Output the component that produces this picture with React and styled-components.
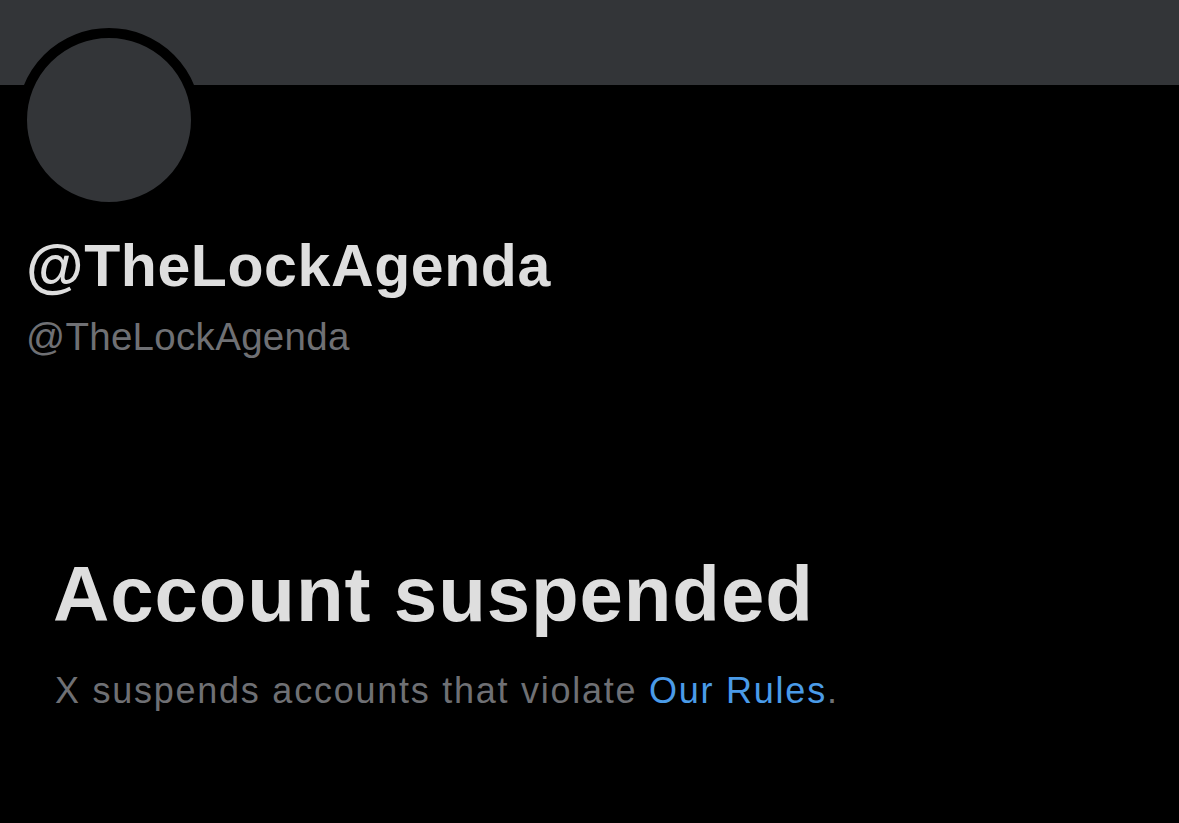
import React from "react";
import styled, { createGlobalStyle } from "styled-components";

const GlobalStyle = createGlobalStyle`
  html, body {
    margin: 0;
    padding: 0;
    background: #000000;
  }
  body {
    font-family: "Liberation Sans", Arial, sans-serif;
    overflow: hidden;
  }
`;

const Page = styled.div`
  width: 1179px;
  height: 823px;
  background: #000000;
  display: flex;
  flex-direction: column;
  overflow: hidden;
`;

const Banner = styled.div`
  height: 85px;
  flex: none;
  background: #333538;
`;

const Profile = styled.div`
  display: flex;
  flex-direction: column;
  padding-left: 17px;
`;

const Avatar = styled.div`
  width: 164px;
  height: 164px;
  margin-top: -57px;
  border: 10px solid #000000;
  border-radius: 50%;
  background: #333538;
`;

const Names = styled.div`
  display: flex;
  flex-direction: column;
  padding-left: 9px;
  margin-top: 20px;
`;

const DisplayName = styled.div`
  font-size: 59px;
  line-height: 68px;
  font-weight: 700;
  color: #dedede;
  letter-spacing: 0.6px;
`;

const Handle = styled.div`
  margin-top: 14px;
  font-size: 38.5px;
  line-height: 46px;
  color: #6f7074;
  letter-spacing: 0.3px;
`;

const Notice = styled.section`
  display: flex;
  flex-direction: column;
  padding-left: 53px;
  margin-top: 189px;
`;

const Title = styled.h1`
  margin: 0;
  font-size: 78px;
  line-height: 90px;
  font-weight: 700;
  color: #dedede;
  letter-spacing: 0.9px;
`;

const Body = styled.p`
  margin: 30px 0 0 2px;
  font-size: 36px;
  line-height: 44px;
  color: #6f7074;
  letter-spacing: 1.75px;
`;

const RulesLink = styled.a`
  color: #4a9be8;
  text-decoration: none;
`;

export default function App() {
  return (
    <>
      <GlobalStyle />
      <Page>
        <Banner />
        <Profile>
          <Avatar />
          <Names>
            <DisplayName>@TheLockAgenda</DisplayName>
            <Handle>@TheLockAgenda</Handle>
          </Names>
        </Profile>
        <Notice>
          <Title>Account suspended</Title>
          <Body>
            X suspends accounts that violate <RulesLink href="#">Our Rules</RulesLink>.
          </Body>
        </Notice>
      </Page>
    </>
  );
}
